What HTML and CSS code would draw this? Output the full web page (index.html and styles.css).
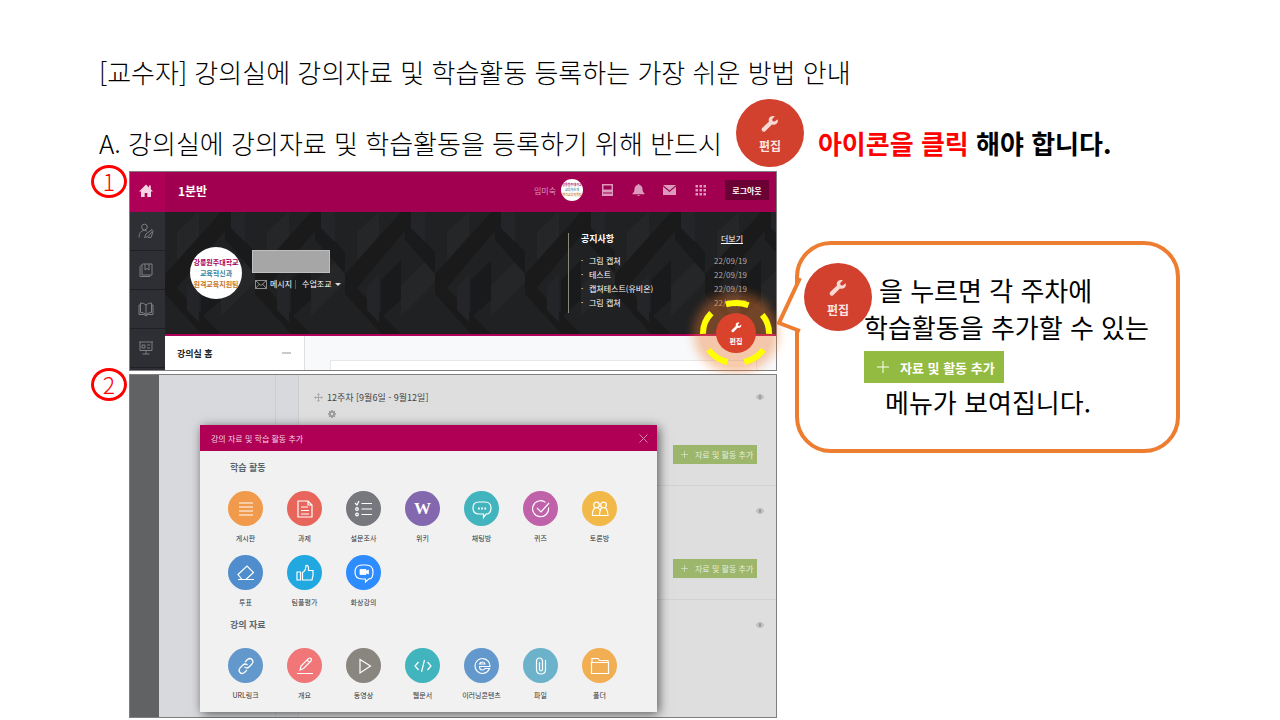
FILE: index.html
```html
<!DOCTYPE html>
<html lang="ko">
<head>
  <meta charset="UTF-8">
  <meta name="viewport" content="width=device-width, initial-scale=1.0">
  <title>강의자료 및 학습활동 등록 안내</title>
  <link rel="stylesheet" href="styles.css">
</head>
<body>
  <!-- shared icons -->
  <svg class="sprite" aria-hidden="true">
    <symbol id="wrench" viewBox="0 0 18 18">
      <path d="M16.6 4.2 13.8 6.6 11.6 6.2 11.2 4 13.9 1.3C11.7.5 9.3 1 8.2 3c-.6 1.100-.6 2.300-.2 3.500L1.200 13c-1.700 1.800.8 5 3 3.200l6.800-6.600c3.400 1 6.800-1.700 5.600-5.400z"/>
    </symbol>
    <symbol id="eye" viewBox="0 0 8 6">
      <path d="M.3 3Q4-1.600 7.700 3 4 7.600.3 3z" fill="none" stroke="currentColor" stroke-width=".8"/>
      <circle cx="4" cy="3" r="1.700" fill="currentColor"/>
    </symbol>
    <symbol id="plus" viewBox="0 0 12 12">
      <path d="M6 0v12M0 6h12" stroke="currentColor"/>
    </symbol>
  </svg>

  <div class="slide">
    <h1>[교수자] 강의실에 강의자료 및 학습활동 등록하는 가장 쉬운 방법 안내</h1>
    <div class="lead">
      <span class="lead-text">A. 강의실에 강의자료 및 학습활동을 등록하기 위해 반드시</span>
      <button class="edit-btn"><svg><use href="#wrench"/></svg>편집</button>
      <strong class="lead-text"><em>아이콘을 클릭</em> 해야 합니다.</strong>
    </div>

    <div class="content">
      <div class="steps">
        <div class="step">
          <span class="num">1</span>
          <div class="shot">
            <nav class="side">
              <a href="#" class="home" aria-label="홈"><svg viewBox="0 0 14 14"><path d="M7 .5 0 7.500h2V13h3.700V9h2.600v4H12V7.500h2L11.800 5.300V1.500H10v2z" fill="currentColor"/></svg></a>
              <a href="#" aria-label="내 정보"><svg viewBox="0 0 16 16"><circle cx="6.500" cy="4" r="2.800"/><path d="M1 14.500C1 10 3 7.500 6.500 7.500q1.500 0 2.500.7M6.500 14.500 8 11l6-4.500 1 1-5 6zM10 14.500h3l2-6"/></svg></a>
              <a href="#" aria-label="과목"><svg viewBox="0 0 16 16"><path d="M2 4.500v10h10v-1M2 4.500 4.500 2H14v11H4V3M7 2v6l2-1.600L11 8V2"/></svg></a>
              <a href="#" aria-label="교재"><svg viewBox="0 0 16 16"><path d="M8 4Q5.500 1.800 2.500 2v9.500Q6 11.500 8 13.500 10 11.500 13.500 11.500V2Q10.500 1.800 8 4zv9.500M2.500 4H1v9.500h5l2 1.500 2-1.500h5V4h-1.500"/></svg></a>
              <a href="#" aria-label="강의"><svg viewBox="0 0 16 16"><path d="M1 2h14M2 2v8.500h12V2M4 5h3v3H4zM9 5h3M9 8h3M8 10.500V14M4.500 14h7"/></svg></a>
            </nav>
            <div class="room">
              <header class="topbar">
                <b>1분반</b>
                <span class="user">임미숙</span>
                <span class="avatar small"><i>강릉원주대학교</i><i>교육혁신과</i><i>원격교육지원팀</i></span>
                <svg viewBox="0 0 12 12"><path d="M.5 0h11v12H.5zM2 1.500v4h8v-4zM1.500 8.500v1h9v-1z" fill-rule="evenodd"/></svg>
                <svg viewBox="0 0 12 12"><path d="M6 0q1 0 1 1 3 .8 3 4.500 0 2.500 2 4v.8H0v-.8q2-1.500 2-4Q2 1.800 5 1q0-1 1-1zM4.700 11h2.600q-.3 1-1.300 1t-1.300-1z"/></svg>
                <svg viewBox="0 0 13 12"><path d="M0 1h13L6.500 6.500zM0 2.500 6.500 8 13 2.500V11H0z"/></svg>
                <svg viewBox="0 0 12 12"><path d="M1 1h2.500v2.500H1zM5 1h2.500v2.500H5zM9 1h2.500v2.500H9zM1 5h2.500v2.500H1zM5 5h2.500v2.500H5zM9 5h2.500v2.500H9zM1 9h2.500v2.500H1zM5 9h2.500v2.500H5zM9 9h2.500v2.500H9z"/></svg>
                <button class="logout">로그아웃</button>
              </header>
              <section class="banner">
                <svg class="pattern" aria-hidden="true">
                  <defs>
                    <pattern id="weave" width="90" height="122" patternUnits="userSpaceOnUse">
                      <path d="M0 0h90v122H0z" fill="#202123"/>
                      <path d="M12 20 34 0v42L12 64zM90 40 56 74v30l34-34z" fill="#252628"/>
                      <path d="M0 62 56 0h20L12 76 56 122H36L0 82z" fill="#1a1a1b"/>
                      <path d="M90 62 60 28V6l30 34zM36 68l20-20v40L36 106z" fill="#191a1b"/>
                      <path d="M22 76 34 62v48L22 98zM66 0h14v30L66 16z" fill="#242528"/>
                    </pattern>
                  </defs>
                  <rect width="100%" height="100%" fill="url(#weave)"/>
                </svg>
                <span class="avatar"><i>강릉원주대학교</i><i>교육혁신과</i><i>원격교육지원팀</i></span>
                <div class="profile">
                  <div class="name-box"></div>
                  <div class="links">
                    <svg viewBox="0 0 12 9"><path d="M.5.5h11v8H.5zL6 5.500 11.500.5M.5 8.500 4.500 4M11.500 8.500 7.500 4" fill="none" stroke="currentColor" stroke-width=".8"/></svg>
                    <a href="#">메시지</a><span class="bar"></span><a href="#">수업조교</a><span class="caret"></span>
                  </div>
                </div>
                <div class="notice">
                  <div class="notice-head"><b>공지사항</b><a href="#">더보기</a></div>
                  <ul>
                    <li><span>그림 캡쳐</span><time>22/09/19</time></li>
                    <li><span>테스트</span><time>22/09/19</time></li>
                    <li><span>캡쳐테스트(유비온)</span><time>22/09/19</time></li>
                    <li><span>그림 캡쳐</span><time>22/09/19</time></li>
                  </ul>
                </div>
              </section>
              <div class="under">
                <div class="menu"><b>강의실 홈</b><span class="minus"></span></div>
                <div class="panel"><div></div></div>
              </div>
            </div>
            <div class="spot">
              <svg class="ring" viewBox="0 0 74 70"><ellipse cx="37" cy="35" rx="33" ry="30"/></svg>
              <button class="edit-btn mini"><svg><use href="#wrench"/></svg>편집</button>
            </div>
          </div>
        </div>

        <div class="step">
          <span class="num">2</span>
          <div class="shot course">
            <div class="rail"></div>
            <div class="left-pane"></div>
            <div class="weeks">
              <section class="week">
                <div class="week-head">
                  <svg class="move" viewBox="0 0 10 10"><path d="M5 0 7 2H5.600v2.400H8V3l2 2-2 2V5.600H5.600V8H7l-2 2-2-2h1.400V5.600H2V7L0 5l2-2v1.400h2.400V2H3z"/></svg>
                  <span>12주차 [9월6일 - 9월12일]</span>
                  <svg class="eye"><use href="#eye"/></svg>
                </div>
                <svg class="gear" viewBox="0 0 10 10"><circle cx="5" cy="5" r="2.600"/><path d="M5 0v2.500M5 7.500V10M0 5h2.500M7.500 5H10M1.500 1.500l1.800 1.800M6.700 6.700l1.800 1.800M8.500 1.500 6.700 3.300M3.300 6.700 1.500 8.500"/></svg>
                <button class="add-btn"><svg><use href="#plus"/></svg>자료 및 활동 추가</button>
              </section>
              <section class="week">
                <div class="week-head"><svg class="eye"><use href="#eye"/></svg></div>
                <button class="add-btn"><svg><use href="#plus"/></svg>자료 및 활동 추가</button>
              </section>
              <section class="week">
                <div class="week-head"><svg class="eye"><use href="#eye"/></svg></div>
              </section>
            </div>

            <div class="modal">
              <header>
                <span>강의 자료 및 학습 활동 추가</span>
                <button aria-label="닫기"><svg viewBox="0 0 9 9"><path d="M.5.5l8 8M8.500.5l-8 8"/></svg></button>
              </header>
              <h3>학습 활동</h3>
              <div class="tools">
                <a href="#"><span class="orange"><svg viewBox="0 0 20 20"><path d="M3 4h14M3 8h14M3 12h14M3 16h14"/></svg></span>게시판</a>
                <a href="#"><span class="red"><svg viewBox="0 0 20 20"><path d="M3 2h10l4 4v12H3zM13 2v4h4M6 8h7M6 11.500h8M6 15h8"/></svg></span>과제</a>
                <a href="#"><span class="gray"><svg viewBox="0 0 20 20"><path d="M1 4l2 2 2-4M7.500 4.500H18M7.500 10H18M7.500 15.500H18"/><circle cx="3" cy="10" r="1.300"/><circle cx="3" cy="15.500" r="1.300"/></svg></span>설문조사</a>
                <a href="#"><span class="purple wiki">W</span>위키</a>
                <a href="#"><span class="teal"><svg viewBox="0 0 20 20"><path d="M7 3h6q6 0 6 6t-5 6.200l-2.500 3.300V15H7q-6 0-6-6t6-6z"/><path d="M6 9.500h1.700M9.200 9.500h1.700M12.400 9.500h1.700" stroke-width="2"/></svg></span>채팅방</a>
                <a href="#"><span class="pink"><svg viewBox="0 0 20 20"><path d="M17.500 8.500A8 8 0 1 1 14.500 3.400M6 9l4 4 8-9"/></svg></span>퀴즈</a>
                <a href="#"><span class="yellow"><svg viewBox="0 0 20 20"><circle cx="6.500" cy="6" r="2.800"/><circle cx="13.500" cy="6" r="2.800"/><path d="M9 16.500H2.500Q2 11.500 5 8.500M11.500 8.500Q9.500 12 9.500 16.500H18Q18 11 15 8.500M8 8.500l2 2.500"/></svg></span>토론방</a>
                <a href="#"><span class="blue"><svg viewBox="0 0 20 20"><path d="M2 11.500 11 3l6.500 6.500-7.500 7H6zM2 16.500h16"/></svg></span>투표</a>
                <a href="#"><span class="sky"><svg viewBox="0 0 20 20"><path d="M2 9h3.500v8H2zM7.500 9.500q3.500-2 3.500-7 3-1 2.500 5H18v5l-1 4.500H7.500z"/></svg></span>팀플평가</a>
                <a href="#"><span class="azure"><svg viewBox="0 0 20 20"><path d="M8 2h4q7 0 7 7t-4 6.800L11.500 19v-3H8q-7 0-7-7t7-7z"/><path d="M6 6.500h6v1.700l2.500-1.200v4L12 9.800v1.700H6z" fill="#fff" stroke-width=".8"/></svg></span>화상강의</a>
              </div>
              <h3>강의 자료</h3>
              <div class="tools">
                <a href="#"><span class="denim"><svg viewBox="0 0 20 20"><path d="M9 6l2.500-2.500q2.500-2 4.500 0t0 4.500L13 11q-2 2-4.500 0M11 14l-2.500 2.500q-2.500 2-4.500 0T4 12l3-3q2-2 4.500 0"/></svg></span>URL링크</a>
                <a href="#"><span class="coral"><svg viewBox="0 0 20 20"><path d="M5 14l1-4 7.500-7.500q1.500-1 2.500 0t0 2.500L8.500 12.500zM12 4l2.500 2.500M2 17.500h16"/></svg></span>개요</a>
                <a href="#"><span class="stone"><svg viewBox="0 0 20 20"><path d="M6 3.500 16.500 10 6 17z"/></svg></span>동영상</a>
                <a href="#"><span class="teal"><svg viewBox="0 0 20 20"><path d="M5.500 6 2 10l3.500 4M14.500 6l3.500 4-3.500 4M11.500 4l-3 12"/></svg></span>웹문서</a>
                <a href="#"><span class="denim"><svg viewBox="0 0 20 20"><path d="M17.500 12.500q-2 5-7.500 5a7.500 7.500 0 1 1 8-7H7.500q0 3.500 3 3.500 1.500 0 2.500-1.500zM7.500 8h5.500q-.3-2-2.500-2t-3 2z"/></svg></span>이러닝콘텐츠</a>
                <a href="#"><span class="aqua"><svg viewBox="0 0 20 20"><path d="M8.500 6v7.500q.2 1.500 1.500 1.500t1.500-1.500V5q-.3-3-3-3t-3 3v9q.3 4 4.500 4t4.500-4V4"/></svg></span>파일</a>
                <a href="#"><span class="amber"><svg viewBox="0 0 20 20"><path d="M1.500 6.500h17v11h-17zM2 6.500v-4h6l1.500 2H18v2"/></svg></span>폴더</a>
              </div>
            </div>
          </div>
        </div>
      </div>

      <aside class="callout">
        <svg class="tail" viewBox="0 0 26 60"><path d="M24 5 3 50 24 58" fill="#fff" stroke="#ed7d31" stroke-width="4"/></svg>
        <button class="edit-btn"><svg><use href="#wrench"/></svg>편집</button>
        <div class="callout-text">
          <p class="first">을 누르면 각 주차에</p>
          <p>학습활동을 추가할 수 있는</p>
          <button class="add-btn big"><svg><use href="#plus"/></svg>자료 및 활동 추가</button>
          <p class="last">메뉴가 보여집니다.</p>
        </div>
      </aside>
    </div>
  </div>
</body>
</html>
```
FILE: styles.css
```css
* {
  box-sizing: border-box;
}

body {
  margin: 0;
  background: #fff;
  color: #000;
  font-family: "Noto Sans CJK KR", sans-serif;
}

h1, h3, p, ul {
  margin: 0;
  padding: 0;
}

button {
  border: none;
  padding: 0;
  font-family: inherit;
  cursor: pointer;
}

a {
  color: inherit;
  text-decoration: none;
}

svg {
  display: block;
  flex: none;
}

.sprite {
  position: absolute;
  width: 0;
  height: 0;
}

.slide {
  padding: 52px 100px 0 91px;
}

h1 {
  padding-left: 8px;
  font-size: 26px;
  font-weight: 300;
  line-height: 40px;
  white-space: nowrap;
}

.lead {
  display: flex;
  align-items: center;
  gap: 14px;
  margin-top: 7px;
  padding-left: 8px;
}

.lead-text {
  padding-top: 20px;
  font-size: 26px;
  font-weight: 300;
  line-height: 40px;
  white-space: nowrap;
}

strong.lead-text {
  font-weight: 700;
}

.lead-text em {
  color: #f00;
  font-style: normal;
}

.edit-btn {
  display: flex;
  flex: none;
  flex-direction: column;
  align-items: center;
  width: 68px;
  height: 68px;
  padding-top: 16px;
  border-radius: 50%;
  background: #d2402e;
  color: #fbe4e0;
  font-size: 12px;
  font-weight: 700;
  line-height: 16px;
}

.edit-btn svg {
  width: 18px;
  height: 18px;
  margin-bottom: 5px;
  fill: #f8d9d4;
}

.content {
  display: grid;
  grid-template-columns: minmax(0, 686fr) minmax(0, 385fr);
  align-items: start;
  column-gap: 18px;
  margin-top: 4px;
}

.steps {
  display: flex;
  flex-direction: column;
  gap: 3px;
}

.step {
  display: flex;
  align-items: flex-start;
  gap: 2px;
}

.num {
  flex: none;
  width: 36px;
  height: 33px;
  margin-top: -6px;
  border: 3px solid #f00;
  border-radius: 50%;
  color: #f00;
  font-size: 23px;
  font-weight: 300;
  line-height: 27px;
  text-align: center;
}

.shot {
  position: relative;
  display: flex;
  flex: 1;
  min-width: 0;
  border: 1px solid #7f7f7f;
}

/* step 1: classroom */
.side {
  width: 35px;
  height: 198px;
  overflow: hidden;
  background: #2d2f34;
  color: #7d7e81;
}

.side a {
  display: flex;
  align-items: center;
  justify-content: center;
  height: 39px;
  padding-right: 3px;
  border-bottom: 1px solid #1f2023;
}

.side svg {
  width: 16px;
  height: 16px;
  fill: none;
  stroke: currentColor;
}

.side .home {
  height: 40px;
  padding-bottom: 3px;
  border: none;
  background: #ad0056;
  color: #f5d3e4;
}

.side .home svg {
  width: 14px;
  height: 14px;
  stroke: none;
}

.room {
  display: flex;
  flex: 1;
  flex-direction: column;
}

.topbar {
  display: flex;
  align-items: center;
  gap: 18px;
  height: 40px;
  padding: 0 7px 4px 13px;
  background: #a0004f;
  color: #dc9abc;
  font-size: 8px;
}

.topbar b {
  margin-right: auto;
  color: #fff;
  font-size: 12px;
}

.topbar svg {
  width: 13px;
  height: 12px;
  fill: currentColor;
}

.user {
  margin-right: -13px;
}

.avatar {
  display: flex;
  flex: none;
  flex-direction: column;
  align-items: center;
  justify-content: center;
  width: 52px;
  height: 52px;
  overflow: hidden;
  border-radius: 50%;
  background: #fff;
  font-size: 7px;
  font-weight: 700;
  line-height: 11px;
}

.avatar i {
  font-style: normal;
  white-space: nowrap;
}

.avatar i:nth-child(1) {
  color: #a9005a;
}

.avatar i:nth-child(2) {
  color: #3487a3;
}

.avatar i:nth-child(3) {
  color: #c87428;
}

.avatar.small {
  width: 22px;
  height: 22px;
  font-size: 3px;
  line-height: 5px;
}

.logout {
  width: 44px;
  height: 20px;
  background: #6b0035;
  color: #fff;
  font-size: 8px;
  font-weight: 700;
}

.banner {
  position: relative;
  display: flex;
  align-items: flex-start;
  height: 124px;
  padding: 0 29px 0 25px;
  border-bottom: 2px solid #b0005a;
  background: #1f2022;
  color: #fff;
}

.pattern {
  position: absolute;
  inset: 0;
  width: 100%;
  height: 100%;
}

.banner > .avatar,
.profile,
.notice {
  position: relative;
}

.banner > .avatar {
  margin-top: 35px;
}

.profile {
  margin: 38px auto 0 10px;
}

.name-box {
  width: 78px;
  height: 23px;
  border: 1px solid #bfbfbf;
  background: #a6a6a6;
}

.links {
  display: flex;
  align-items: center;
  gap: 3px;
  margin-top: 4px;
  padding-left: 3px;
  font-size: 8px;
  line-height: 14px;
}

.links svg {
  width: 12px;
  height: 9px;
  color: #aaa;
}

.bar {
  width: 1px;
  height: 9px;
  margin-right: 3px;
  background: #555;
}

.caret {
  border: 3px solid transparent;
  border-top-color: #ddd;
  border-bottom: none;
}

.notice {
  width: 179px;
  height: 80px;
  margin-top: 21px;
  padding-left: 12px;
  border-left: 1px solid #8a887c;
  font-size: 8px;
}

.notice-head {
  display: flex;
  justify-content: space-between;
  padding-right: 4px;
  font-size: 9px;
  line-height: 12px;
}

.notice-head a {
  font-size: 8px;
  text-decoration: underline;
}

.notice ul {
  margin-top: 9px;
  list-style: none;
}

.notice li {
  display: flex;
  line-height: 14px;
}

.notice li::before {
  content: "·";
  width: 8px;
}

.notice time {
  margin-left: auto;
  color: #aaa;
}

.under {
  display: flex;
  flex: 1;
}

.menu {
  display: flex;
  align-items: center;
  justify-content: space-between;
  width: 140px;
  padding: 0 13px 0 12px;
  border-right: 1px solid #dde0e3;
  color: #222;
  font-size: 9px;
}

.minus {
  width: 9px;
  height: 2px;
  background: #c9c9c9;
}

.panel {
  flex: 1;
  padding: 24px 19px 0 25px;
  background: #f8f9fb;
}

.panel div {
  height: 100%;
  border: 1px solid #e6e8ea;
  border-bottom: none;
  background: #fff;
}

/* highlighted edit button over the banner corner */
.spot {
  position: absolute;
  right: 3px;
  bottom: 2px;
  display: flex;
  align-items: center;
  justify-content: center;
  width: 74px;
  height: 70px;
  border-radius: 50%;
  background: rgba(237, 125, 49, 0.4);
  box-shadow: 0 0 10px 6px rgba(237, 125, 49, 0.4);
}

.ring {
  position: absolute;
  inset: 0;
  width: 74px;
  height: 70px;
  fill: none;
  stroke: #ff0;
  stroke-width: 6;
  stroke-dasharray: 23 17;
  stroke-dashoffset: -18;
}

.edit-btn.mini {
  width: 40px;
  height: 40px;
  padding-top: 9px;
  background: #d9432c;
  color: #fff;
  font-size: 7px;
  line-height: 10px;
}

.mini svg {
  width: 11px;
  height: 11px;
  margin-bottom: 3px;
  fill: #fff;
}

/* step 2: course page with the activity dialog */
.course {
  background: #dedede;
}

.rail {
  width: 29px;
  background: #616264;
}

.left-pane {
  width: 140px;
  padding-left: 116px;
  border-right: 1px solid #cdced1;
  background: #d8d9dc;
}

.left-pane::before {
  content: "";
  display: block;
  width: 1px;
  height: 100%;
  background: #cbccd0;
}

.weeks {
  flex: 1;
}

.week {
  display: flex;
  flex-direction: column;
  height: 114px;
  padding: 17px 12px 0 15px;
  border-bottom: 1px solid #d2d2d2;
}

.week:first-child {
  height: 111px;
  padding-top: 14px;
}

.week:last-child {
  height: 117px;
  border-bottom: none;
}

.week-head {
  display: flex;
  align-items: center;
  gap: 4px;
  height: 16px;
  color: #444;
  font-size: 9px;
}

.move {
  width: 9px;
  height: 9px;
  fill: #aaa;
}

.eye {
  width: 8px;
  height: 6px;
  margin-left: auto;
  color: #999;
}

.gear {
  width: 8px;
  height: 8px;
  margin: 5px 0 -13px 14px;
  fill: none;
  stroke: #999;
  stroke-width: 2;
}

.add-btn {
  display: flex;
  align-items: center;
  align-self: flex-end;
  gap: 7px;
  width: 84px;
  height: 19px;
  margin: 40px 7px 0 0;
  padding-left: 8px;
  background: #9cb66b;
  color: #e7eddc;
  font-size: 8px;
  white-space: nowrap;
}

.add-btn svg {
  width: 7px;
  height: 7px;
}

.modal {
  position: absolute;
  top: 50px;
  left: 70px;
  right: 119px;
  padding-bottom: 11px;
  background: #f1f1f1;
  box-shadow: 2px 2px 10px rgba(0, 0, 0, 0.6);
}

.modal header {
  display: flex;
  align-items: center;
  justify-content: space-between;
  height: 26px;
  padding: 0 9px 0 11px;
  background: #b00055;
  color: #f3d5e2;
  font-size: 8px;
}

.modal header button {
  background: none;
}

.modal header svg {
  width: 9px;
  height: 9px;
  stroke: #d98bae;
}

.modal h3 {
  margin: 9px 30px 15px;
  color: #5a656e;
  font-size: 9px;
  font-weight: 700;
  line-height: 16px;
}

.tools {
  display: grid;
  grid-template-columns: repeat(7, 1fr);
  row-gap: 11px;
  padding: 0 28px 0 16px;
}

.tools a {
  display: flex;
  flex-direction: column;
  align-items: center;
  gap: 6px;
  color: #333;
  font-size: 7px;
  line-height: 12px;
  white-space: nowrap;
}

.tools span {
  display: flex;
  align-items: center;
  justify-content: center;
  width: 35px;
  height: 35px;
  border-radius: 50%;
}

.tools svg {
  width: 20px;
  height: 20px;
  fill: none;
  stroke: #fff;
  stroke-width: 1.2;
}

.wiki {
  color: #fff;
  font-family: "Liberation Serif", serif;
  font-size: 17px;
  font-weight: 700;
}

.orange { background: #f19a4b; }
.red { background: #e7655b; }
.gray { background: #77787d; }
.purple { background: #8368b0; }
.teal { background: #41b4bd; }
.pink { background: #c062a9; }
.yellow { background: #f2b948; }
.blue { background: #508dcc; }
.sky { background: #22a8e0; }
.azure { background: #2d8cff; }
.denim { background: #6398cc; }
.coral { background: #f07678; }
.stone { background: #89857f; }
.aqua { background: #6db2cb; }
.amber { background: #f2ae53; }

/* speech bubble */
.callout {
  position: relative;
  display: flex;
  align-items: flex-start;
  margin-top: 70px;
  padding: 18px 0 28px 5px;
  border: 4px solid #ed7d31;
  border-radius: 36px;
}

.tail {
  position: absolute;
  top: 28px;
  left: -23px;
  width: 26px;
  height: 60px;
}

.callout-text {
  margin: 8px 0 1px -8px;
  font-size: 26px;
  line-height: 37px;
  white-space: nowrap;
}

.callout-text .first {
  padding-left: 15px;
}

.callout-text .last {
  padding-left: 21px;
}

.add-btn.big {
  gap: 11px;
  width: 140px;
  height: 32px;
  margin: 6px 0 0;
  padding-left: 13px;
  background: #94bb41;
  color: #fff;
  font-size: 13px;
  font-weight: 700;
}

.big svg {
  width: 12px;
  height: 12px;
}
```
